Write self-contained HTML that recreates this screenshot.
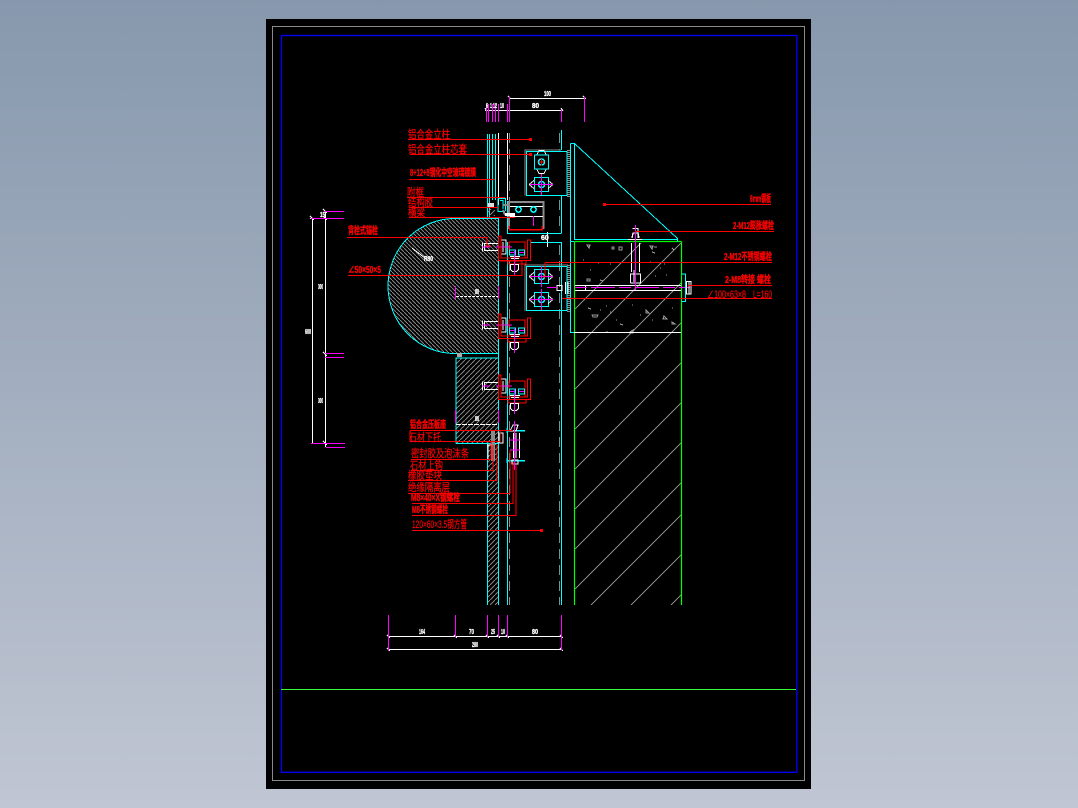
<!DOCTYPE html>
<html><head><meta charset="utf-8"><title>CAD</title>
<style>
html,body{margin:0;padding:0;width:1078px;height:808px;overflow:hidden;background:linear-gradient(180deg,#8798ad 0%,#c0c6d3 100%)}
svg{position:absolute;left:0;top:0;display:block;shape-rendering:crispEdges}
text{font-family:"Liberation Sans","Noto Sans CJK SC",sans-serif;shape-rendering:auto}
.r{fill:#f00;font-size:11px;stroke:#f00;stroke-width:.2}
.rb{fill:#f00;font-size:10px;font-weight:700;stroke:#f00;stroke-width:.35}
.w{fill:#fff;font-size:7px;font-weight:700;stroke:#fff;stroke-width:.35}
</style></head><body>
<svg width="1078" height="808" viewBox="0 0 1078 808" xmlns="http://www.w3.org/2000/svg" fill="none">
<defs>
<pattern id="h1" width="4" height="4" patternUnits="userSpaceOnUse"><path d="M0 0L4 4" stroke="#808080" stroke-width="1"/></pattern>
<pattern id="h2" width="5" height="5" patternUnits="userSpaceOnUse"><path d="M0 5L5 0" stroke="#808080" stroke-width="1"/></pattern>
<clipPath id="conc"><rect x="575" y="243" width="106" height="362"/></clipPath>
<g id="clip">
<path d="M482.5 -4.5V4.5M484.5 -4V4M484 -3.5H498M484 3.5H498" stroke="#fff" stroke-width="1.2"/>
<path d="M501 -7h5v14h-5zM503 -5v10" stroke="#fff" stroke-width="1.4"/>
<path d="M482 0H490" stroke="#f0f"/>
<path d="M496 0H512" stroke="#f0f"/>
<path d="M498.5 -11V13.5H530.5V-7H527.5V11H501V-11z" stroke="#f00"/>
<path d="M509 -5H525V11M509 -5V3M508 13.5V17H526V13.5" stroke="#f00"/>
<path d="M509.5 3h6v5h-6zM518.5 3h6v5h-6z" stroke="#0ff" stroke-width="1.2"/>
<path d="M510 9.5H520M511 11.5H519" stroke="#fff" stroke-width="1.3"/>
<path d="M510.5 17.5h8v5l-2 2h-4l-2-2z" stroke="#fff" stroke-width="1.2"/>
<path d="M514.5 3V28M510 5.5H514M519 5.5H524" stroke="#f0f"/>
</g>
<g id="bolt">
<path d="M534.5 0.5H548.5V14.5H534.5z" stroke="#0ff" stroke-width="1.1"/>
<path d="M529 7.5l5-4M529 7.5l5 4M553 7.5l-5-4M553 7.5l-5 4" stroke="#fff"/>
<circle cx="541.5" cy="7.5" r="3" stroke="#0ff" stroke-width="1.6"/>
<path d="M541.5 -3V18M530 7.5H553" stroke="#f0f"/>
</g>
<g id="boltv">
<path d="M534.5 0.5H548.5V14.5H534.5z" stroke="#0ff" stroke-width="1.1"/>
<path d="M537 0l2-4h5l2 4M537 15l2 4h5l2-4" stroke="#fff"/>
<circle cx="541.5" cy="7.5" r="3" stroke="#0ff" stroke-width="1.6"/>
<path d="M539 7.5h5M541.5 4v7" stroke="#f00"/>
</g>
</defs>

<rect x="266" y="19" width="545" height="770" fill="#000"/>
<rect x="272.5" y="26.5" width="532" height="754" stroke="#8a8a8a"/>
<rect x="281.5" y="35.5" width="515.3" height="736.8" stroke="#00f" stroke-width="1.3" style="shape-rendering:geometricPrecision"/>
<path d="M281 689.5H796" stroke="#3f3"/>

<!-- hatch fills -->
<path d="M498 218.5H455A67 67.5 0 0 0 455 353.5H498z" fill="url(#h1)"/>
<rect x="456" y="358" width="42" height="85" fill="url(#h2)"/>
<rect x="488" y="443" width="10" height="162" fill="url(#h2)"/>

<!-- concrete hatch -->
<g clip-path="url(#conc)" stroke="#8a8a8a">
<path d="M575 309L642 242M575 349L681 243M575 389L681 283M575 429L681 323M575 469L681 363M575 509L681 403M575 549L681 443M575 589L681 483M591 605L681 515M631 605L681 555M671 605L681 595"/>
</g>
<g stroke="#9a9a9a" stroke-width="1">
<path d="M587 245l3 0-1 3zM612 247h2v2h-2zM619 247h3v3h-3zM650 246l3 0-1 3zM652 252l3 1M654 247h3M583 260h1M587 279h3v2h-3zM600 280l3 1M590 270h1M598 263h1M610 264h1M660 268h1M664 264h1M666 275h1M672 248l2 2M650 262h1M655 276h1M588 308l3 1M592 315h6l-1 2h-4zM600 310h1M606 306h1M610 312h1M616 320h1M620 324l3 1M632 305h1M640 315h1M646 310l3 3h-3zM652 320h1M664 316l3 3h-4zM672 308h1M630 332l3-2v3h-3zM672 322l3 2h-3zM596 327h1M606 332h2"/>
</g>

<!-- long verticals -->
<path d="M487.5 134V218M489.5 134V218M492.5 134V200M495.5 134V200M487.5 443V605M498.5 218V605M507.5 242V605M561.5 242V605M561.5 130V150M561.5 196V233" stroke="#0ff"/>
<path d="M498.5 133V205M507.5 133V200" stroke="#fff"/>
<path d="M509.5 133V205M509.5 245V605M559.5 245V605M559.5 133V150M559.5 200V232" stroke="#8a8a8a" stroke-dasharray="10 6"/>
<path d="M574.5 241.5V605M681.5 241.5V605M574.5 241.5H681.5" stroke="#0f0" stroke-width="1.2" style="shape-rendering:geometricPrecision"/>
<path d="M573 332.5H681M575 285.5H681M575 290.5H681M585.5 285V290" stroke="#fff"/>
<path d="M575 287.5H690" stroke="#f0f" stroke-dasharray="12 4 24 4"/>

<!-- arc + blocks outline -->
<path d="M498 218.5H455A67 67.5 0 0 0 455 353.5H498" stroke="#0ff"/>
<path d="M456 443.5V358H498M456 443.5H498" stroke="#0ff"/>
<rect x="457" y="353" width="5" height="4" fill="#aaa"/>
<path d="M455.5 287V299M498.5 287V299M456 296.5H498" stroke="#fff" stroke-dasharray="3 1"/>
<path d="M455.5 286V299M498.5 286V299" stroke="#f0f"/>
<path d="M455.5 410V423M498.5 410V423" stroke="#f0f"/>
<path d="M456 424.5H498" stroke="#fff" stroke-dasharray="5 1"/>

<!-- triangle bracket -->
<path d="M570.5 143.5H574.5L677.5 238.5V241.5M574.5 143.5V239.5H677M570.5 143.5V332.5H574" stroke="#0ff"/>
<path d="M570 241.5H574" stroke="#0ff"/>
<path d="M568.5 150V197M568.5 265V313" stroke="#8a8a8a" stroke-width="3" stroke-dasharray="1 1"/>

<!-- bolt boxes -->
<path d="M525 195.5V150H561" stroke="#8a8a8a" stroke-width="1.3"/>
<path d="M526.5 195.5V151.5H567V195.5H526" stroke="#0ff"/>
<path d="M525 311V265H568" stroke="#8a8a8a" stroke-width="1.3"/>
<path d="M526.5 310.5V266.5H567V310.5H526" stroke="#0ff"/>
<use href="#boltv" y="154.5"/>
<use href="#bolt" y="177"/>
<use href="#bolt" y="269"/>
<use href="#bolt" y="292"/>

<!-- upper small box -->
<path d="M507.5 201V233.5H561.5M530 242.5H561.5" stroke="#0ff"/>
<path d="M509 229V202H543.5V229" stroke="#8a8a8a" stroke-width="1.6"/>
<path d="M510 206.5H543M510 216.5H543" stroke="#fff"/>
<path d="M509 229.5H543M509 226V229M542 226V229" stroke="#f00" stroke-width="1.5"/>
<circle cx="518.5" cy="209.5" r="2.6" stroke="#0ff" stroke-width="1.6"/>
<circle cx="533.5" cy="209.5" r="2.6" stroke="#0ff" stroke-width="1.6"/>
<path d="M533.5 216V226" stroke="#f0f"/>
<path d="M498 198.5H505.5V211M498 198.5V211.5H505M500 200.5H503V209" stroke="#0ff"/>
<path d="M503 205H509V220M505 215L503 210" stroke="#8a8a8a" stroke-width="2"/>
<path d="M488 203h6v5h-6z" fill="#ddd"/>
<rect x="488" y="209" width="7" height="7" fill="url(#h2)"/>
<path d="M505 214.5H515" stroke="#fff" stroke-width="3"/>
<path d="M547.5 232V247" stroke="#fff"/>
<text x="541" y="240" class="w" font-size="5">60</text>

<!-- clips -->
<use href="#clip" y="247"/>
<use href="#clip" y="325"/>
<use href="#clip" y="386"/>

<!-- lower fixing -->
<path d="M513.5 433V458M519.5 433V458M516 433V458" stroke="#fff" stroke-width="1.2"/>
<path d="M507 430.5H525M507 460.5H525M507 428V433M507 458V463" stroke="#0ff" stroke-width="1.5"/>
<path d="M510 431H516l2-6h-5zM512 464h6v-4h-6z" stroke="#fff"/>
<path d="M514.5 421V470" stroke="#f0f"/>
<path d="M510 440H520M510 450H520" stroke="#f0f"/>
<rect x="491" y="431" width="4" height="30" fill="#8a8a8a"/>
<path d="M499 433h4v10h-4z" stroke="#fff"/>
<path d="M487 445H492M488 445V460" stroke="#fff"/>

<!-- anchor bolt -->
<path d="M628 239.5H642M632.5 228.5H638V238M632 238l1-5h5l1 5" stroke="#fff" stroke-width="1.2"/>
<path d="M631.5 243V272M639.5 243V272M630.5 283V274H640.5V283H630.5M634 270V282" stroke="#fff"/>
<path d="M635.5 225V290" stroke="#f0f"/>
<path d="M557 285.5h5v5h-5zM565.5 282v12M568 282v12" stroke="#fff" stroke-width="1.2"/>
<path d="M547 287.5H557" stroke="#f0f"/>
<path d="M681.5 274H685.5V301.5H681.5" stroke="#0ff"/>
<path d="M686.5 281.5H691V294H686.5zM689 281.5V294" stroke="#fff"/>

<!-- leaders -->
<g stroke="#f00">
<path d="M408 139.5H531M410 154.5H531M409 179.5H495M407 197.5H505M409 207.5H498M409 217.5H515"/>
<path d="M347 237.5H487V246H491M348 275.5H522V261M522 261H500"/>
<path d="M603 204.5H771M635 231.5H774M545 262.5H772M545 262.5V277H543M688 285.5H772M562 298.5H772"/>
<path d="M410 430.5H513M410 430.5V441.5H500V431M411 459.5H491M491 459.5V442M411 470.5H493V445M408 480.5H497V445M408 493.5H510V450M412 503.5H513V462M412 515.5H516V465M412 530.5H542"/>
</g>
<rect x="529" y="138" width="3" height="3" fill="#f00"/>
<rect x="529" y="153" width="3" height="3" fill="#f00"/>
<rect x="603" y="203" width="3" height="3" fill="#f00"/>
<rect x="540" y="529" width="3" height="3" fill="#f00"/>

<!-- dimensions -->
<g stroke="#fff">
<path d="M509 98.5H584M485 110.5H562"/>
<path d="M388 636.5H561M388 649.5H561"/>
<path d="M312.5 218V443M325.5 211V447M310 218.5H325M311 443.5H325"/>
<path d="M508 96l3 3M583 96l3 3M485 108l2 3M561 108l2 3M387 635l3 3M454 635l3 3M486 635l3 3M497 635l3 3M506 635l3 3M560 635l3 3M387 648l3 3M560 648l3 3M323 209l4 4M323 216l4 4M323 352l4 4M323 441l4 4M310 216l4 4"/>
</g>
<g stroke="#f0f">
<path d="M509.5 97V122M584.5 97V122M486.5 104V122M488.5 104V122M492.5 104V122M495.5 104V122M498.5 104V122M507.5 104V122M561.5 110V122"/>
<path d="M388.5 615V651M455.5 615V637M487.5 615V637M498.5 615V637M507.5 615V637M561.5 615V650"/>
<path d="M325 211.5H344M311 218.5H344M325 353.5H344M325 357.5H344M311 443.5H345M326 447.5H345"/>
</g>

<!-- white dim text -->
<text x="544" y="96" class="w" textLength="7" lengthAdjust="spacingAndGlyphs">100</text>
<text x="532" y="108" class="w" textLength="7" lengthAdjust="spacingAndGlyphs">80</text>
<text x="486" y="108" class="w" textLength="2" lengthAdjust="spacingAndGlyphs">6</text>
<text x="490" y="108" class="w" textLength="2" lengthAdjust="spacingAndGlyphs">1</text>
<text x="493" y="108" class="w" textLength="4" lengthAdjust="spacingAndGlyphs">12</text>
<text x="500" y="108" class="w" textLength="4" lengthAdjust="spacingAndGlyphs">10</text>
<text x="419" y="634" class="w" textLength="6" lengthAdjust="spacingAndGlyphs">164</text>
<text x="469" y="634" class="w" textLength="5" lengthAdjust="spacingAndGlyphs">70</text>
<text x="491" y="634" class="w" textLength="4" lengthAdjust="spacingAndGlyphs">25</text>
<text x="501" y="634" class="w" textLength="4" lengthAdjust="spacingAndGlyphs">10</text>
<text x="532" y="634" class="w" textLength="6" lengthAdjust="spacingAndGlyphs">80</text>
<text x="472" y="647" class="w" textLength="6" lengthAdjust="spacingAndGlyphs">280</text>
<text x="318" y="289" class="w" textLength="5" lengthAdjust="spacingAndGlyphs">300</text>
<text x="305" y="334" class="w" textLength="6" lengthAdjust="spacingAndGlyphs">600</text>
<text x="318" y="403" class="w" textLength="5" lengthAdjust="spacingAndGlyphs">300</text>
<text x="320" y="217" class="w" textLength="5" lengthAdjust="spacingAndGlyphs">15</text>
<text x="475" y="294" class="w" textLength="4" lengthAdjust="spacingAndGlyphs">80</text>
<text x="475" y="421" class="w" textLength="4" lengthAdjust="spacingAndGlyphs">80</text>
<text x="424" y="261" class="w" textLength="9" lengthAdjust="spacingAndGlyphs">R80</text>
<path d="M412 248L425 258" stroke="#fff"/>

<!-- red labels -->
<text x="408" y="138" class="r" textLength="42" lengthAdjust="spacingAndGlyphs">铝合金立柱</text>
<text x="408" y="153" class="r" textLength="59" lengthAdjust="spacingAndGlyphs">铝合金立柱芯套</text>
<text x="410" y="176" class="rb" textLength="66" lengthAdjust="spacingAndGlyphs">8+12+8钢化中空玻璃镀膜</text>
<text x="407" y="196" class="r" textLength="17" lengthAdjust="spacingAndGlyphs">附框</text>
<text x="408" y="206" class="r" textLength="25" lengthAdjust="spacingAndGlyphs">结构胶</text>
<text x="408" y="216" class="r" textLength="17" lengthAdjust="spacingAndGlyphs">横梁</text>
<text x="348" y="234" class="rb" textLength="30" lengthAdjust="spacingAndGlyphs">背栓式锚栓</text>
<text x="348" y="273" class="rb" textLength="33" lengthAdjust="spacingAndGlyphs">∠50×50×5</text>
<text x="750" y="202" class="rb" textLength="21" lengthAdjust="spacingAndGlyphs">6mm钢板</text>
<text x="733" y="229" class="rb" textLength="41" lengthAdjust="spacingAndGlyphs">2-M12膨胀螺栓</text>
<text x="724" y="260" class="rb" textLength="48" lengthAdjust="spacingAndGlyphs">2-M12不锈钢螺栓</text>
<text x="725" y="283" class="rb" textLength="46" lengthAdjust="spacingAndGlyphs">2-M8转接 螺栓</text>
<text x="707" y="298" class="r" textLength="39" lengthAdjust="spacingAndGlyphs">∠100×63×8</text>
<text x="753" y="298" class="r" textLength="19" lengthAdjust="spacingAndGlyphs">L=160</text>
<text x="410" y="428" class="rb" textLength="36" lengthAdjust="spacingAndGlyphs">铝合金压板座</text>
<text x="409" y="441" class="r" textLength="32" lengthAdjust="spacingAndGlyphs">石材下托</text>
<text x="411" y="457" class="r" textLength="58" lengthAdjust="spacingAndGlyphs">密封胶及泡沫条</text>
<text x="410" y="469" class="r" textLength="33" lengthAdjust="spacingAndGlyphs">石材上钩</text>
<text x="408" y="479" class="r" textLength="34" lengthAdjust="spacingAndGlyphs">橡胶垫块</text>
<text x="408" y="491" class="r" textLength="42" lengthAdjust="spacingAndGlyphs">绝缘隔离层</text>
<text x="411" y="501" class="rb" textLength="49" lengthAdjust="spacingAndGlyphs">M8×40×X钢螺栓</text>
<text x="412" y="513" class="rb" textLength="36" lengthAdjust="spacingAndGlyphs">M8不锈钢螺栓</text>
<text x="412" y="528" class="r" textLength="55" lengthAdjust="spacingAndGlyphs">120×60×3.5钢方管</text>
</svg>
</body></html>
